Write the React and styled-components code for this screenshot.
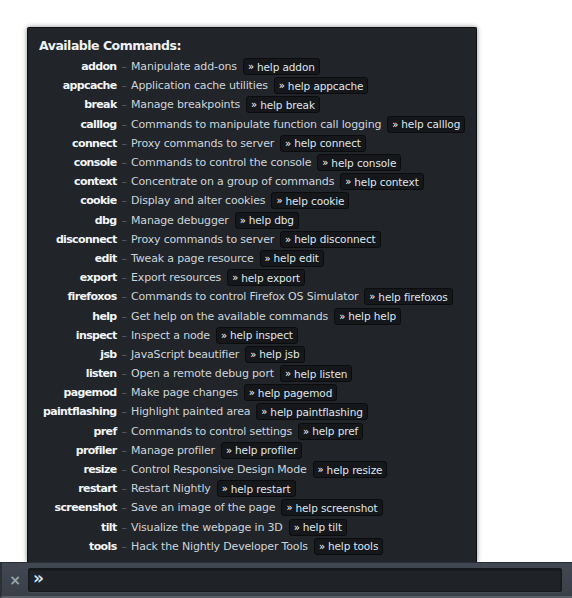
import React from "react";
import styled, { createGlobalStyle } from "styled-components";

const GlobalStyle = createGlobalStyle`
  html, body { margin: 0; padding: 0; background: #ffffff; }
  body { font-family: "DejaVu Sans", "Liberation Sans", sans-serif; }
`;

const commands = [
  ["addon", "Manipulate add-ons"],
  ["appcache", "Application cache utilities"],
  ["break", "Manage breakpoints"],
  ["calllog", "Commands to manipulate function call logging"],
  ["connect", "Proxy commands to server"],
  ["console", "Commands to control the console"],
  ["context", "Concentrate on a group of commands"],
  ["cookie", "Display and alter cookies"],
  ["dbg", "Manage debugger"],
  ["disconnect", "Proxy commands to server"],
  ["edit", "Tweak a page resource"],
  ["export", "Export resources"],
  ["firefoxos", "Commands to control Firefox OS Simulator"],
  ["help", "Get help on the available commands"],
  ["inspect", "Inspect a node"],
  ["jsb", "JavaScript beautifier"],
  ["listen", "Open a remote debug port"],
  ["pagemod", "Make page changes"],
  ["paintflashing", "Highlight painted area"],
  ["pref", "Commands to control settings"],
  ["profiler", "Manage profiler"],
  ["resize", "Control Responsive Design Mode"],
  ["restart", "Restart Nightly"],
  ["screenshot", "Save an image of the page"],
  ["tilt", "Visualize the webpage in 3D"],
  ["tools", "Hack the Nightly Developer Tools"],
];

const Page = styled.div`
  height: 100vh;
  display: flex;
  flex-direction: column;
  overflow: hidden;
`;

const Stage = styled.div`
  flex: 1;
  display: flex;
  padding: 27px 0 0 27px;
  min-height: 0;
`;

const Panel = styled.div`
  width: 450px;
  box-sizing: border-box;
  background: #212428;
  border: 1px solid #0e0f11;
  border-bottom: none;
  border-radius: 2px 2px 0 0;
  box-shadow: 0 0 5px rgba(0, 0, 0, 0.45);
  padding: 9px 10px 0 11px;
`;

const Title = styled.h1`
  margin: 0 0 2px 0;
  font-size: 12.5px;
  letter-spacing: -0.5px;
  font-weight: bold;
  color: #eef2f6;
  line-height: 18px;
`;

const CommandGrid = styled.div`
  display: grid;
  grid-template-columns: max-content max-content 1fr;
  grid-auto-rows: 19.2px;
  align-items: center;
  font-size: 11px;
`;

const Name = styled.span`
  text-align: right;
  font-weight: bold;
  letter-spacing: -0.65px;
  color: #f2f5f8;
  padding-left: 4px;
`;

const Dash = styled.span`
  color: #5d636b;
  padding: 0 4px 0 5px;
`;

const Desc = styled.span`
  color: #cdd5dc;
  letter-spacing: -0.17px;
  display: flex;
  align-items: center;
  gap: 6px;
  white-space: nowrap;
`;

const HelpButton = styled.span`
  display: inline-flex;
  align-items: center;
  height: 15px;
  padding: 0 4px;
  background: #15171b;
  border: 1px solid #0b0c0e;
  border-radius: 3px;
  color: #dfe6ec;
  font-size: 10.5px;
  letter-spacing: -0.1px;
`;

const Chevron = styled.span`
  color: #ffffff;
  margin-right: 3px;
  font-size: 10px;
`;

const Toolbar = styled.div`
  height: 36px;
  flex-shrink: 0;
  display: flex;
  align-items: center;
  background: linear-gradient(#414852, #3a4048);
  border-top: 1px solid #2a2e34;
  border-bottom: 2px solid #5a6068;
  border-left: 2px solid #2c3036;
  box-sizing: border-box;
`;

const Close = styled.span`
  width: 26px;
  text-align: center;
  color: #9aa3ad;
  font-size: 14px;
  font-weight: bold;
`;

const Input = styled.div`
  flex: 1;
  margin-right: 10px;
  height: 24px;
  box-sizing: border-box;
  background: #1f2226;
  border: 1px solid #16181b;
  border-radius: 2px;
  box-shadow: inset 0 1px 2px rgba(0, 0, 0, 0.4), 0 1px 0 rgba(255, 255, 255, 0.06);
  display: flex;
  align-items: center;
  padding-left: 4px;
`;

const Prompt = styled.span`
  color: #d3e7fa;
  font-weight: bold;
  font-size: 17px;
  line-height: 1;
  letter-spacing: -1px;
  margin-top: -2px;
`;

export default function App() {
  return (
    <Page>
      <GlobalStyle />
      <Stage>
        <Panel>
          <Title>Available Commands:</Title>
          <CommandGrid>
            {commands.map(([name, desc]) => (
              <React.Fragment key={name}>
                <Name>{name}</Name>
                <Dash>–</Dash>
                <Desc>
                  {desc}
                  <HelpButton>
                    <Chevron>»</Chevron>help {name}
                  </HelpButton>
                </Desc>
              </React.Fragment>
            ))}
          </CommandGrid>
        </Panel>
      </Stage>
      <Toolbar>
        <Close>×</Close>
        <Input>
          <Prompt>»</Prompt>
        </Input>
      </Toolbar>
    </Page>
  );
}
